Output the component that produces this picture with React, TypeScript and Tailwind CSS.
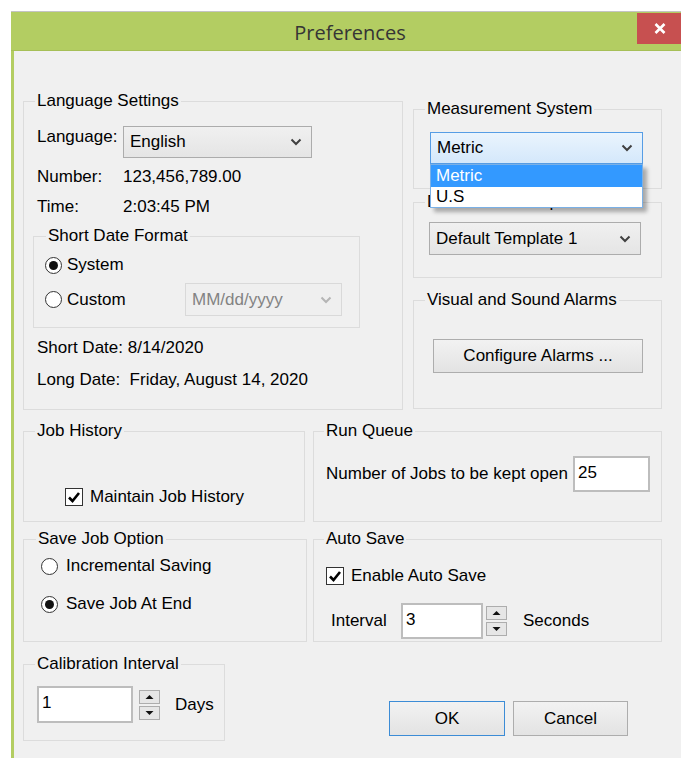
import type { ReactNode } from "react"
import clsx from "clsx"

function GroupBox({
  title,
  className,
  legendClass = "ml-[11px]",
  children,
}: {
  title: string
  className?: string
  legendClass?: string
  children?: ReactNode
}) {
  return (
    <div className={clsx("border border-[#dcdcdc]", className)}>
      <div className={clsx("-mt-[11px] w-fit bg-[#f0f0f0] px-[2px] leading-[20px]", legendClass)}>{title}</div>
      {children}
    </div>
  )
}

function Chevron({ color = "#404040" }: { color?: string }) {
  return (
    <svg width="12" height="8" viewBox="0 0 12 8">
      <path d="M1.5 1.5 L6 6 L10.5 1.5" fill="none" stroke={color} strokeWidth="2" />
    </svg>
  )
}

function Combo({ value, className, disabled }: { value: string; className?: string; disabled?: boolean }) {
  return (
    <div
      className={clsx(
        "flex items-center justify-between border pl-[6px] pr-[9px]",
        disabled
          ? "border-[#d9d9d9] bg-[#efefef] text-[#838383]"
          : "border-[#acacac] bg-gradient-to-b from-[#f0f0f0] to-[#e5e5e5]",
        className
      )}
    >
      <span>{value}</span>
      <Chevron color={disabled ? "#b5b5b5" : "#404040"} />
    </div>
  )
}

function Radio({ checked, label, gap = "gap-[5px]" }: { checked?: boolean; label: string; gap?: string }) {
  return (
    <div className={clsx("flex items-center leading-[20px]", gap)}>
      <span className="flex h-[17px] w-[17px] items-center justify-center rounded-full border border-[#333] bg-white">
        {checked && <span className="h-[9px] w-[9px] rounded-full bg-[#111]" />}
      </span>
      <span>{label}</span>
    </div>
  )
}

function Checkbox({ label }: { label: string }) {
  return (
    <div className="flex items-center gap-[7px] leading-[20px]">
      <span className="flex h-[18px] w-[18px] items-center justify-center border border-[#333] bg-white">
        <svg width="14" height="14" viewBox="0 0 14 14">
          <path d="M2 7.5 L5.5 11 L12 3" fill="none" stroke="#000" strokeWidth="2.6" />
        </svg>
      </span>
      <span>{label}</span>
    </div>
  )
}

function TextBox({ value, className }: { value: string; className?: string }) {
  return (
    <div className={clsx("border-2 border-[#bdbdbd] bg-white pl-[3px] pt-[5px] leading-[20px]", className)}>
      {value}
    </div>
  )
}

function Spinner() {
  return (
    <div className="flex flex-col gap-[2px]">
      <div className="flex h-[14px] w-[21px] items-center justify-center border border-[#adadad] bg-[#e6e6e6]">
        <svg width="9" height="6" viewBox="0 0 9 6">
          <path d="M0.5 5 L4.5 1 L8.5 5 Z" fill="#111" />
        </svg>
      </div>
      <div className="flex h-[14px] w-[21px] items-center justify-center border border-[#adadad] bg-[#e6e6e6]">
        <svg width="9" height="6" viewBox="0 0 9 6">
          <path d="M0.5 1 L4.5 5 L8.5 1 Z" fill="#111" />
        </svg>
      </div>
    </div>
  )
}

function Button({ label, className }: { label: string; className?: string }) {
  return (
    <div
      className={clsx(
        "flex items-center justify-center border bg-gradient-to-b from-[#f2f2f2] to-[#e3e3e3]",
        className
      )}
    >
      {label}
    </div>
  )
}

export default function App() {
  return (
    <div className="h-[761px] w-[681px] overflow-hidden bg-white font-['Liberation_Sans',Arial,sans-serif] text-[17px] leading-[20px] text-black">
      <div className="h-[11px]" />
      <div className="ml-[11px] w-[678px] border-t border-[#c4c4c4] bg-[#b3cd62]">
        {/* title bar */}
        <div className="grid h-[39px] grid-cols-[52px_1fr_52px] border-b border-[#a6bf57]">
          <div />
          <div className="pt-[8px] text-center font-['Open_Sans',sans-serif] text-[20px] leading-[26px] text-[#353535]">
            Preferences
          </div>
          <div className="pt-[1px]">
            <div className="flex h-[31px] w-[45px] items-center justify-center bg-[#c75050]">
              <svg width="12" height="11" viewBox="0 0 12 11">
                <path d="M1.5 1 L10.5 10 M10.5 1 L1.5 10" stroke="#fff" strokeWidth="2.6" />
              </svg>
            </div>
          </div>
        </div>

        {/* dialog body */}
        <div className="mx-[3px] mb-[3px] h-[707px] bg-[#f0f0f0]">
          <div className="flex gap-[10px] pl-[9px] pt-[50px]">
            <GroupBox title="Language Settings" legendClass="ml-[2px]" className="h-[309px] w-[380px] px-[9px]">
              <div className="mt-[15px] flex pl-[4px]">
                <span className="w-[86px] pt-[1px]">Language:</span>
                <Combo value="English" className="h-[32px] w-[189px]" />
              </div>
              <div className="mt-[9px] flex pl-[4px]">
                <span className="w-[86px]">Number:</span>
                <span>123,456,789.00</span>
              </div>
              <div className="mt-[10px] flex pl-[4px]">
                <span className="w-[86px]">Time:</span>
                <span>2:03:45 PM</span>
              </div>
              <GroupBox title="Short Date Format" legendClass="ml-[12px]" className="mt-[19px] h-[92px] w-[327px]">
                <div className="mt-[9px] pl-[11px]">
                  <Radio checked label="System" />
                </div>
                <div className="mt-[8px] flex items-center pl-[11px]">
                  <div className="w-[140px]">
                    <Radio label="Custom" />
                  </div>
                  <Combo value="MM/dd/yyyy" disabled className="h-[33px] w-[157px]" />
                </div>
              </GroupBox>
              <div className="mt-[10px] pl-[4px]">Short Date: 8/14/2020</div>
              <div className="mt-[12px] whitespace-pre pl-[4px]">Long Date:  Friday, August 14, 2020</div>
            </GroupBox>

            <div className="mt-[8px] w-[249px]">
              <GroupBox title="Measurement System" className="h-[80px]">
                <div className="relative ml-[16px] mt-[13px] w-[213px]">
                  <div className="flex h-[32px] items-center justify-between border border-[#569de5] bg-gradient-to-b from-[#eaf4fd] to-[#d4e8fb] pl-[6px] pr-[9px]">
                    <span>Metric</span>
                    <Chevron />
                  </div>
                  <div className="absolute left-0 top-full z-10 w-full border border-[#7ab0e6] bg-white shadow-[4px_4px_4px_rgba(0,0,0,0.3)]">
                    <div className="h-[22px] bg-[#3399ff] pl-[5px] leading-[22px] text-white">Metric</div>
                    <div className="h-[20px] pl-[5px] leading-[20px]">U.S</div>
                  </div>
                </div>
              </GroupBox>
              <GroupBox title="Default Job Template" className="mt-[13px] h-[76px]">
                <Combo value="Default Template 1" className="ml-[15px] mt-[10px] h-[33px] w-[212px]" />
              </GroupBox>
              <GroupBox title="Visual and Sound Alarms" className="mt-[22px] h-[109px]">
                <Button
                  label="Configure Alarms ..."
                  className="ml-[19px] mt-[29px] h-[34px] w-[210px] border-[#adadad]"
                />
              </GroupBox>
            </div>
          </div>

          <div className="mt-[21px] flex gap-[8px] pl-[9px]">
            <GroupBox title="Job History" className="h-[91px] w-[282px]">
              <div className="mt-[46px] pl-[41px]">
                <Checkbox label="Maintain Job History" />
              </div>
            </GroupBox>
            <GroupBox title="Run Queue" legendClass="ml-[10px]" className="h-[91px] w-[349px]">
              <div className="mt-[15px] flex items-center gap-[5px] pl-[12px]">
                <span>Number of Jobs to be kept open</span>
                <TextBox value="25" className="h-[36px] w-[77px]" />
              </div>
            </GroupBox>
          </div>

          <div className="mt-[17px] flex gap-[6px] pl-[9px]">
            <GroupBox title="Save Job Option" legendClass="ml-[12px]" className="h-[103px] w-[284px]">
              <div className="mt-[7px] pl-[17px]">
                <Radio label="Incremental Saving" gap="gap-[8px]" />
              </div>
              <div className="mt-[18px] pl-[17px]">
                <Radio checked label="Save Job At End" gap="gap-[8px]" />
              </div>
            </GroupBox>
            <GroupBox title="Auto Save" legendClass="ml-[10px]" className="h-[103px] w-[349px]">
              <div className="mt-[17px] pl-[12px]">
                <Checkbox label="Enable Auto Save" />
              </div>
              <div className="mt-[17px] flex items-center pl-[17px]">
                <span className="w-[70px]">Interval</span>
                <TextBox value="3" className="h-[36px] w-[82px]" />
                <div className="ml-[3px]">
                  <Spinner />
                </div>
                <span className="ml-[16px]">Seconds</span>
              </div>
            </GroupBox>
          </div>

          <div className="mt-[22px] flex items-start pl-[9px]">
            <GroupBox title="Calibration Interval" className="h-[77px] w-[202px]">
              <div className="mt-[12px] flex items-center pl-[13px]">
                <TextBox value="1" className="h-[37px] w-[96px]" />
                <div className="ml-[6px]">
                  <Spinner />
                </div>
                <span className="ml-[15px]">Days</span>
              </div>
            </GroupBox>
            <div className="ml-[164px] mt-[37px] flex gap-[8px]">
              <Button label="OK" className="h-[35px] w-[116px] border-[#3c8cd6]" />
              <Button label="Cancel" className="h-[35px] w-[115px] border-[#adadad]" />
            </div>
          </div>
        </div>
      </div>
    </div>
  )
}
